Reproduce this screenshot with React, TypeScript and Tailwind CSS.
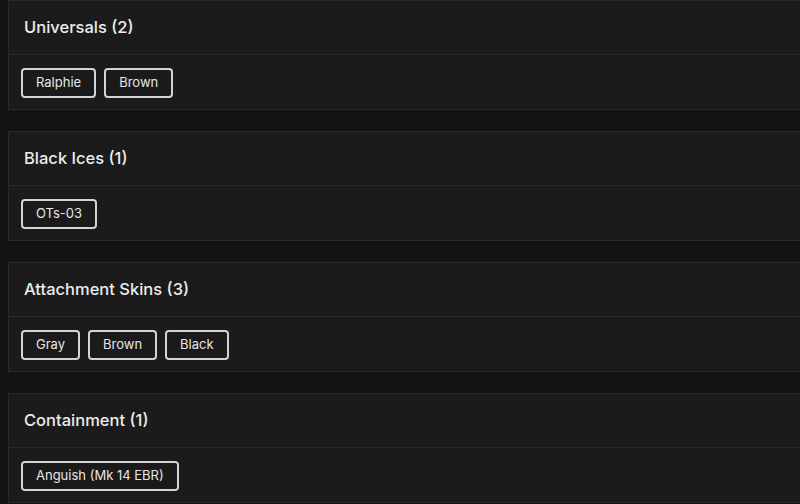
const groups = [
  { title: "Universals", items: ["Ralphie", "Brown"] },
  { title: "Black Ices", items: ["OTs-03"] },
  { title: "Attachment Skins", items: ["Gray", "Brown", "Black"] },
  { title: "Containment", items: ["Anguish (Mk 14 EBR)"] },
];

function Section({ title, items }: { title: string; items: string[] }) {
  return (
    <div className="border border-[#2a2a2a] bg-[#1b1b1b] -mr-2">
      <div className="h-[54px] flex items-center px-[15px] border-b border-[#2a2a2a]">
        <h2 className="text-[16.5px] font-medium text-[#ececec]">
          {title} ({items.length})
        </h2>
      </div>
      <div className="h-[54px] flex items-center gap-2 px-3 pt-[2px]">
        {items.map((it, i) => (
          <span
            key={i}
            className="h-[30px] flex items-center px-[13px] border-2 border-[#d4d4d4] rounded-[4px] text-[13px] text-[#e6e6e6] bg-[#1a1a1a]"
          >
            {it}
          </span>
        ))}
      </div>
    </div>
  );
}

export default function App() {
  return (
    <div
      className="w-[800px] h-[504px] overflow-hidden bg-[#131313] pl-2 flex flex-col gap-[21px]"
      style={{ fontFamily: "Inter, 'Noto Sans', sans-serif" }}
    >
      {groups.map((g) => (
        <Section key={g.title} title={g.title} items={g.items} />
      ))}
    </div>
  );
}
